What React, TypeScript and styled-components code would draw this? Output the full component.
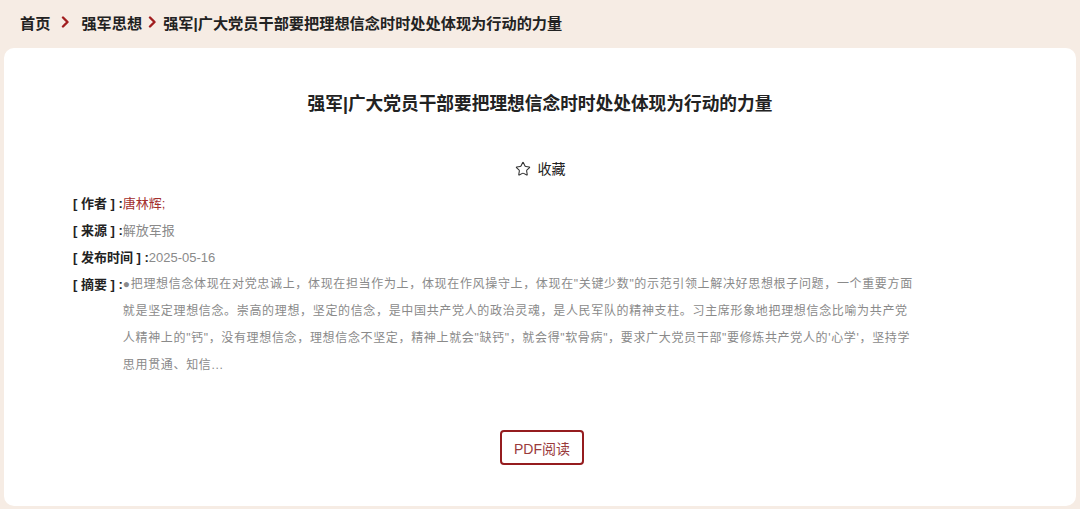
import React from 'react';
import styled, { createGlobalStyle } from 'styled-components';
import { Star } from 'lucide-react';

const GlobalStyle = createGlobalStyle`
  html, body {
    margin: 0;
    padding: 0;
    background: #f6ece4;
    font-family: "Liberation Sans", "Noto Sans CJK SC", sans-serif;
  }
`;

const Page = styled.div`
  width: 1080px;
  height: 509px;
  overflow: hidden;
  background: #f6ece4;
`;

const Breadcrumb = styled.nav`
  height: 48px;
  display: flex;
  align-items: center;
  padding: 0 0 4px 20px;
  box-sizing: border-box;
  font-size: 15.2px;
  font-weight: 700;
  color: #222;
`;

const Crumb = styled.span`
  letter-spacing: 0;
`;

const Sep = styled.span<{ $gap: number }>`
  display: inline-flex;
  align-items: center;
  margin: 0 ${(p) => p.$gap}px;
`;

const Card = styled.main`
  margin: 0 4px;
  height: 458px;
  background: #ffffff;
  border-radius: 10px;
  padding-top: 44px;
  box-sizing: border-box;
`;

const Title = styled.h1`
  margin: 0;
  text-align: center;
  font-size: 17.7px;
  line-height: 24px;
  font-weight: 700;
  color: #222;
`;

const Collect = styled.div`
  margin-top: 43px;
  display: flex;
  justify-content: center;
  align-items: center;
  gap: 7px;
  font-size: 14px;
  line-height: 20px;
  color: #222;
`;

const Meta = styled.div`
  margin-top: 11px;
  padding-left: 69px;
`;

const Row = styled.div`
  display: flex;
  font-size: 13px;
  line-height: 27px;
`;

const Label = styled.span`
  flex: none;
  font-weight: 700;
  color: #222;
  white-space: pre;
`;

const Value = styled.span<{ $red?: boolean }>`
  color: ${(p) => (p.$red ? '#a3302e' : '#8a8a8a')};
`;

const Abstract = styled.p`
  margin: 0;
  width: 790px;
  font-size: 12px;
  line-height: 27px;
  letter-spacing: 0.66px;
  color: #8a8a8a;
`;

const Actions = styled.div`
  margin-top: 51px;
  display: flex;
  justify-content: center;
`;

const PdfButton = styled.button`
  width: 84px;
  height: 35px;
  margin-left: 4px;
  border: 2px solid #951c1f;
  border-radius: 4px;
  background: #fff;
  color: #9a3a3b;
  font-family: inherit;
  font-size: 14px;
  cursor: pointer;
`;

const Chevron = () => (
  <svg width="9" height="12" viewBox="0 0 9 12">
    <path d="M2 1.5 L6.5 6 L2 10.5" fill="none" stroke="#a11d1f" strokeWidth="2.4" strokeLinecap="round" strokeLinejoin="round" />
  </svg>
);

const title = '强军|广大党员干部要把理想信念时时处处体现为行动的力量';

const summary =
  '●把理想信念体现在对党忠诚上，体现在担当作为上，体现在作风操守上，体现在"关键少数"的示范引领上解决好思想根子问题，一个重要方面就是坚定理想信念。崇高的理想，坚定的信念，是中国共产党人的政治灵魂，是人民军队的精神支柱。习主席形象地把理想信念比喻为共产党人精神上的"钙"，没有理想信念，理想信念不坚定，精神上就会"缺钙"，就会得"软骨病"，要求广大党员干部"要修炼共产党人的\'心学\'，坚持学思用贯通、知信...';

export default function App() {
  return (
    <Page>
      <GlobalStyle />
      <Breadcrumb>
        <Crumb>首页</Crumb>
        <Sep $gap={11}>
          <Chevron />
        </Sep>
        <Crumb>强军思想</Crumb>
        <Sep $gap={6}>
          <Chevron />
        </Sep>
        <Crumb>{title}</Crumb>
      </Breadcrumb>
      <Card>
        <Title>{title}</Title>
        <Collect>
          <Star size={16} strokeWidth={1.6} color="#333" />
          <span>收藏</span>
        </Collect>
        <Meta>
          <Row>
            <Label>[ 作者 ] :</Label>
            <Value $red>唐林辉;</Value>
          </Row>
          <Row>
            <Label>[ 来源 ] :</Label>
            <Value>解放军报</Value>
          </Row>
          <Row>
            <Label>[ 发布时间 ] :</Label>
            <Value>2025-05-16</Value>
          </Row>
          <Row>
            <Label>[ 摘要 ] :</Label>
            <Abstract>{summary}</Abstract>
          </Row>
        </Meta>
        <Actions>
          <PdfButton>PDF阅读</PdfButton>
        </Actions>
      </Card>
    </Page>
  );
}
